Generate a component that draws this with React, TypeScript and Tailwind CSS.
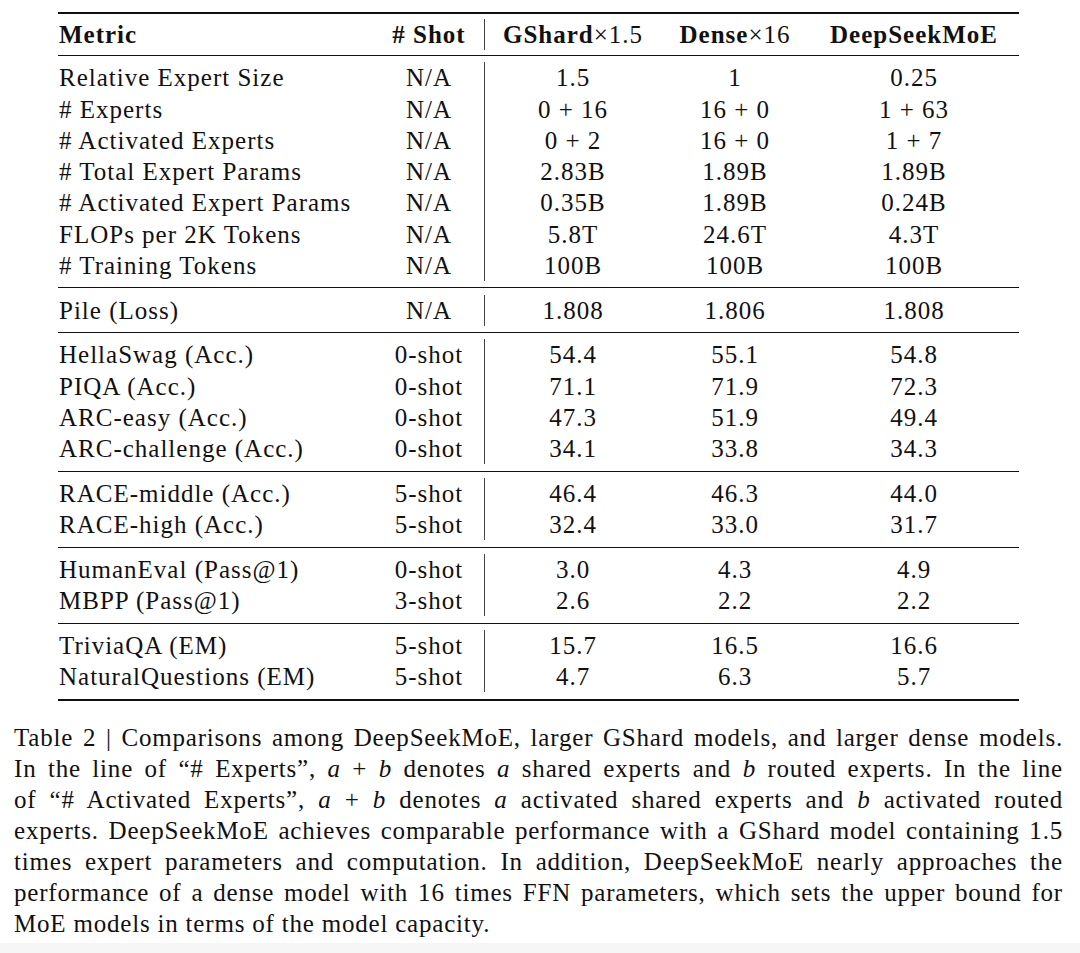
import React from "react";

type Row = { metric: string; shot: string; g: string; d: string; s: string };

const groups: Row[][] = [
  [
    { metric: "Relative Expert Size", shot: "N/A", g: "1.5", d: "1", s: "0.25" },
    { metric: "# Experts", shot: "N/A", g: "0 + 16", d: "16 + 0", s: "1 + 63" },
    { metric: "# Activated Experts", shot: "N/A", g: "0 + 2", d: "16 + 0", s: "1 + 7" },
    { metric: "# Total Expert Params", shot: "N/A", g: "2.83B", d: "1.89B", s: "1.89B" },
    { metric: "# Activated Expert Params", shot: "N/A", g: "0.35B", d: "1.89B", s: "0.24B" },
    { metric: "FLOPs per 2K Tokens", shot: "N/A", g: "5.8T", d: "24.6T", s: "4.3T" },
    { metric: "# Training Tokens", shot: "N/A", g: "100B", d: "100B", s: "100B" },
  ],
  [{ metric: "Pile (Loss)", shot: "N/A", g: "1.808", d: "1.806", s: "1.808" }],
  [
    { metric: "HellaSwag (Acc.)", shot: "0-shot", g: "54.4", d: "55.1", s: "54.8" },
    { metric: "PIQA (Acc.)", shot: "0-shot", g: "71.1", d: "71.9", s: "72.3" },
    { metric: "ARC-easy (Acc.)", shot: "0-shot", g: "47.3", d: "51.9", s: "49.4" },
    { metric: "ARC-challenge (Acc.)", shot: "0-shot", g: "34.1", d: "33.8", s: "34.3" },
  ],
  [
    { metric: "RACE-middle (Acc.)", shot: "5-shot", g: "46.4", d: "46.3", s: "44.0" },
    { metric: "RACE-high (Acc.)", shot: "5-shot", g: "32.4", d: "33.0", s: "31.7" },
  ],
  [
    { metric: "HumanEval (Pass@1)", shot: "0-shot", g: "3.0", d: "4.3", s: "4.9" },
    { metric: "MBPP (Pass@1)", shot: "3-shot", g: "2.6", d: "2.2", s: "2.2" },
  ],
  [
    { metric: "TriviaQA (EM)", shot: "5-shot", g: "15.7", d: "16.5", s: "16.6" },
    { metric: "NaturalQuestions (EM)", shot: "5-shot", g: "4.7", d: "6.3", s: "5.7" },
  ],
];

const cols = "grid grid-cols-[316px_110px_1px_176px_148px_210px]";

const Var = ({ v }: { v: string }) => <span className="italic">{v}</span>;

export default function App() {
  return (
    <div className="flex h-[953px] w-[1080px] flex-col bg-white text-[#111] [font-family:'Liberation_Serif',serif]">
      <div className="h-[943px] pl-[14px] pt-[12px]">
        {/* table */}
        <div className="ml-[44px] w-[961px] border-t-2 border-b-2 border-[#111] text-[25px] tracking-[1px]">
          <div className={`${cols} h-[42px] items-center border-b border-[#111]`}>
            <div className="pl-px font-bold">Metric</div>
            <div className="text-center font-bold"># Shot</div>
            <div className="h-[31px] bg-[#444]" />
            <div className="text-center">
              <span className="font-bold">GShard</span>×1.5
            </div>
            <div className="text-center">
              <span className="font-bold">Dense</span>×16
            </div>
            <div className="text-center font-bold">DeepSeekMoE</div>
          </div>
          {groups.map((rows, gi) => (
            <div
              key={gi}
              className={`py-[6.25px] ${gi < groups.length - 1 ? "border-b border-[#111]" : ""}`}
            >
              {rows.map((r) => (
                <div key={r.metric} className={`${cols} h-[31.25px] leading-[31.25px]`}>
                  <div className="pl-px">{r.metric}</div>
                  <div className="text-center">{r.shot}</div>
                  <div className="bg-[#444]" />
                  <div className="text-center">{r.g}</div>
                  <div className="text-center">{r.d}</div>
                  <div className="text-center">{r.s}</div>
                </div>
              ))}
            </div>
          ))}
        </div>

        {/* caption */}
        <div className="mt-[21px] w-[1049px] text-[25px] leading-[31px] tracking-[0.8px]">
          <div className="text-justify [text-align-last:justify]">
            Table 2 | Comparisons among DeepSeekMoE, larger GShard models, and larger dense models.
          </div>
          <div className="text-justify [text-align-last:justify]">
            In the line of “# Experts”, <Var v="a" /> + <Var v="b" /> denotes <Var v="a" /> shared experts and{" "}
            <Var v="b" /> routed experts. In the line
          </div>
          <div className="text-justify [text-align-last:justify]">
            of “# Activated Experts”, <Var v="a" /> + <Var v="b" /> denotes <Var v="a" /> activated shared experts
            and <Var v="b" /> activated routed
          </div>
          <div className="text-justify [text-align-last:justify]">
            experts. DeepSeekMoE achieves comparable performance with a GShard model containing 1.5
          </div>
          <div className="text-justify [text-align-last:justify]">
            times expert parameters and computation. In addition, DeepSeekMoE nearly approaches the
          </div>
          <div className="text-justify [text-align-last:justify]">
            performance of a dense model with 16 times FFN parameters, which sets the upper bound for
          </div>
          <div>MoE models in terms of the model capacity.</div>
        </div>
      </div>
      <div className="h-[10px] bg-[#f6f6f6]" />
    </div>
  );
}
